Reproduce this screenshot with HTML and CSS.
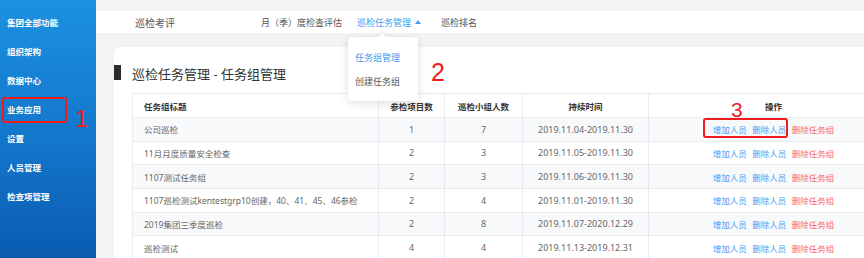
FILE: index.html
```html
<!DOCTYPE html>
<html lang="zh-CN">
<head>
<meta charset="utf-8">
<title>巡检任务管理 - 任务组管理</title>
<link rel="stylesheet" href="styles.css">
</head>
<body>
<div class="app">
  <aside class="sidebar">
    <div class="side-item">集团全部功能</div>
    <div class="side-item">组织架构</div>
    <div class="side-item">数据中心</div>
    <div class="side-item">业务应用</div>
    <div class="side-item">设置</div>
    <div class="side-item">人员管理</div>
    <div class="side-item">检查项管理</div>
  </aside>
  <main class="main">
    <nav class="topnav">
      <span class="nav-title">巡检考评</span>
      <span class="tab tab-eval">月（季）度检查评估</span>
      <span class="tab tab-active">巡检任务管理<i class="caret"></i>
        <div class="dropdown">
          <div class="dd-item dd-current">任务组管理</div>
          <div class="dd-item">创建任务组</div>
        </div>
      </span>
      <span class="tab">巡检排名</span>
    </nav>
    <section class="card">
      <h1 class="card-title"><span class="bar"></span>巡检任务管理 - 任务组管理</h1>
      <div class="table">
        <div class="tr th">
          <div class="cell c-left">任务组标题</div>
          <div class="cell">参检项目数</div>
          <div class="cell">巡检小组人数</div>
          <div class="cell">持续时间</div>
          <div class="cell">操作</div>
        </div>
        <div class="tr stripe">
          <div class="cell c-left">公司巡检</div>
          <div class="cell">1</div>
          <div class="cell">7</div>
          <div class="cell">2019.11.04-2019.11.30</div>
          <div class="cell ops"><a class="op">增加人员</a><a class="op">删除人员</a><a class="op op-del">删除任务组</a></div>
        </div>
        <div class="tr">
          <div class="cell c-left">11月月度质量安全检查</div>
          <div class="cell">2</div>
          <div class="cell">3</div>
          <div class="cell">2019.11.05-2019.11.30</div>
          <div class="cell ops"><a class="op">增加人员</a><a class="op">删除人员</a><a class="op op-del">删除任务组</a></div>
        </div>
        <div class="tr stripe">
          <div class="cell c-left">1107测试任务组</div>
          <div class="cell">2</div>
          <div class="cell">3</div>
          <div class="cell">2019.11.06-2019.11.30</div>
          <div class="cell ops"><a class="op">增加人员</a><a class="op">删除人员</a><a class="op op-del">删除任务组</a></div>
        </div>
        <div class="tr">
          <div class="cell c-left">1107巡检测试kentestgrp10创建，40、41、45、46参检</div>
          <div class="cell">2</div>
          <div class="cell">4</div>
          <div class="cell">2019.11.01-2019.11.30</div>
          <div class="cell ops"><a class="op">增加人员</a><a class="op">删除人员</a><a class="op op-del">删除任务组</a></div>
        </div>
        <div class="tr stripe">
          <div class="cell c-left">2019集团三季度巡检</div>
          <div class="cell">2</div>
          <div class="cell">8</div>
          <div class="cell">2019.11.07-2020.12.29</div>
          <div class="cell ops"><a class="op">增加人员</a><a class="op">删除人员</a><a class="op op-del">删除任务组</a></div>
        </div>
        <div class="tr">
          <div class="cell c-left">巡检测试</div>
          <div class="cell">4</div>
          <div class="cell">4</div>
          <div class="cell">2019.11.13-2019.12.31</div>
          <div class="cell ops"><a class="op">增加人员</a><a class="op">删除人员</a><a class="op op-del">删除任务组</a></div>
        </div>
      </div>
    </section>
  </main>
</div>
<div class="mark-box box-1"></div>
<div class="mark-num num-1">1</div>
<div class="mark-box box-2"></div>
<div class="mark-num num-2">2</div>
<div class="mark-box box-3"></div>
<div class="mark-num num-3">3</div>
</body>
</html>
```
FILE: styles.css
```css
* { box-sizing: border-box; }

body {
  margin: 0;
  width: 864px;
  height: 258px;
  overflow: hidden;
  position: relative;
  background: #f2f3f5;
  font-family: "Noto Sans", "Noto Sans CJK SC", sans-serif;
}

.app {
  display: flex;
  height: 258px;
}

/* sidebar */
.sidebar {
  width: 96px;
  flex: none;
  padding-top: 8px;
  background: linear-gradient(180deg, #1c91e1 0%, #1376cb 55%, #0a5cb0 100%);
}

.side-item {
  height: 29px;
  line-height: 29px;
  padding-left: 7px;
  color: #fff;
  font-size: 8.5px;
  font-weight: bold;
}

/* main */
.main {
  flex: 1;
  min-width: 0;
  overflow: hidden;
  padding-top: 11px;
}

.topnav {
  height: 22px;
  background: #fff;
  display: flex;
  align-items: center;
  padding-left: 39px;
  font-size: 9px;
  color: #555;
}

.nav-title {
  font-size: 10px;
  margin-right: 86px;
}

.tab { white-space: nowrap; }

.tab-eval { margin-right: 15px; }

.tab-active {
  position: relative;
  color: #3d9cf2;
  margin-right: 20px;
  display: flex;
  align-items: center;
}

.caret {
  display: inline-block;
  width: 0;
  height: 0;
  margin-left: 4px;
  border-left: 3px solid transparent;
  border-right: 3px solid transparent;
  border-bottom: 4px solid #3d9cf2;
}

.dropdown {
  position: absolute;
  left: -9px;
  top: 21px;
  width: 70px;
  height: 64px;
  padding-top: 9px;
  background: #fff;
  border-radius: 4px;
  box-shadow: 0 2px 8px rgba(0, 0, 0, 0.14);
  z-index: 5;
}

.dropdown::before {
  content: "";
  position: absolute;
  left: 31px;
  top: -3px;
  width: 6px;
  height: 6px;
  background: #fff;
  transform: rotate(45deg);
  box-shadow: -1px -1px 2px rgba(0, 0, 0, 0.06);
}

.dd-item {
  position: relative;
  height: 24px;
  line-height: 24px;
  padding-left: 7px;
  font-size: 9px;
  color: #555;
}

.dd-current { color: #3d9cf2; }

/* card */
.card {
  margin: 14px 0 0 18px;
  width: 800px;
  height: 260px;
  padding-top: 18px;
  background: #fff;
  border-radius: 6px;
}

.card-title {
  margin: 0 0 10px 0;
  display: flex;
  align-items: flex-start;
  height: 18px;
  line-height: 18px;
  font-size: 13px;
  font-weight: normal;
  color: #333;
}

.bar {
  width: 7px;
  height: 15px;
  margin-right: 11px;
  background: #2b2b2b;
}

/* table */
.table {
  margin-left: 18px;
  width: 767px;
  border-top: 1px solid #e8ecf1;
  border-left: 1px solid #e8ecf1;
}

.tr {
  display: grid;
  grid-template-columns: 246px 66px 78px 126px 250px;
  height: 23.66px;
  background: #fff;
}

.tr.th { height: 24px; }

.tr.stripe { background: #f8f9fb; }

.cell {
  display: flex;
  align-items: center;
  justify-content: center;
  border-right: 1px solid #e8ecf1;
  border-bottom: 1px solid #e8ecf1;
  font-size: 9px;
  color: #666;
  white-space: nowrap;
}

.th .cell {
  font-weight: bold;
  color: #333;
  font-size: 8.5px;
}

.c-left {
  justify-content: flex-start;
  padding-left: 11px;
  font-size: 8.5px;
}

.ops { gap: 5.5px; }

.op {
  font-size: 8.5px;
  color: #449ff4;
}

.op-del { color: #f46b6b; }

/* annotation overlays */
.mark-box {
  position: absolute;
  border: 2px solid #ee1c1c;
  border-radius: 3px;
}

.box-1 { left: 2px; top: 97px; width: 65px; height: 26px; }
.box-2 { left: 349px; top: 47px; width: 68px; height: 25px; }
.box-3 { left: 703px; top: 118px; width: 85px; height: 20px; }

.mark-num {
  position: absolute;
  font-family: "Liberation Sans", Arial, sans-serif;
  line-height: 1;
  color: #ee1c1c;
}

.num-1 { left: 75px; top: 107px; font-size: 24px; }
.num-2 { left: 431px; top: 60px; font-size: 25px; }
.num-3 { left: 731px; top: 99px; font-size: 21px; }
```
